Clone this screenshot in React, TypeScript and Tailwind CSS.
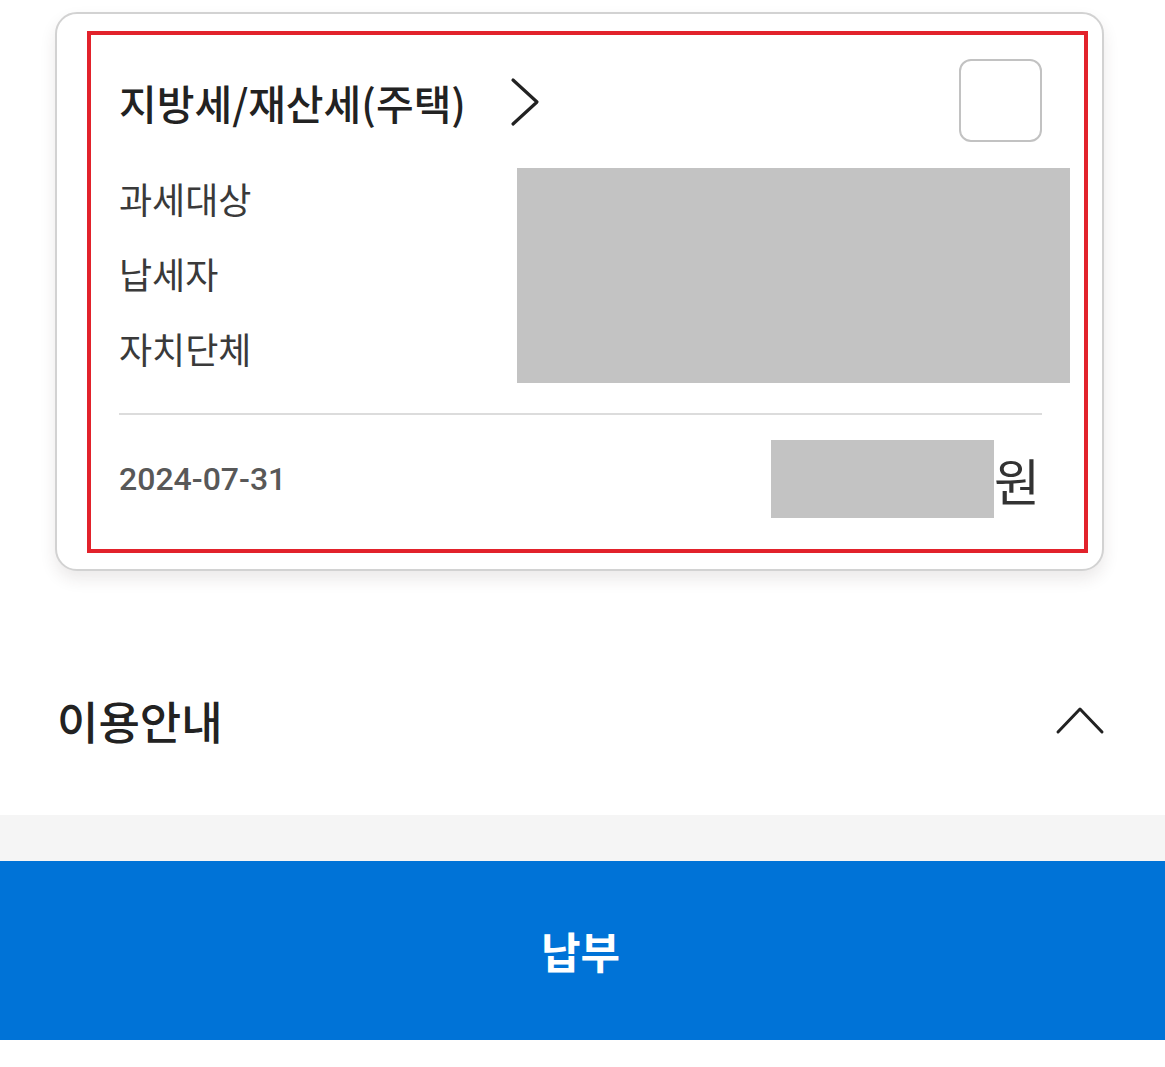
const rows = ['과세대상', '납세자', '자치단체'];

function ChevronRight() {
  return (
    <svg width="30" height="50" viewBox="0 0 30 50" fill="none" className="shrink-0">
      <polyline points="3,3 27,25 3,47" stroke="#222" strokeWidth="3.2" strokeLinecap="round" strokeLinejoin="round" />
    </svg>
  );
}

function ChevronUp() {
  return (
    <svg width="50" height="30" viewBox="0 0 50 30" fill="none" className="shrink-0">
      <polyline points="3,27 25,4 47,27" stroke="#222" strokeWidth="3" strokeLinecap="round" strokeLinejoin="round" />
    </svg>
  );
}

export default function App() {
  return (
    <div
      className="w-[1165px] h-[1067px] bg-white flex flex-col"
      style={{ fontFamily: '"Noto Sans CJK KR", "Noto Sans", sans-serif' }}
    >
      {/* bill card */}
      <div className="pt-[12px] pl-[55px] pr-[61px]">
        <div className="rounded-[22px] border-2 border-[#d2d2d2] bg-white shadow-[0_8px_16px_rgba(60,40,40,0.10)] pl-[30px] pr-[14px] pt-[17px] pb-[16px]">
          <div className="border-[4px] border-[#e2222b] pl-[28px] pr-[42px]">
            <div className="flex items-center justify-between pt-[24px] h-[107px]">
              <div className="flex items-center gap-[44px] pt-[3px]">
                <span className="text-[41px] font-medium text-[#222] leading-none">지방세/재산세(주택)</span>
                <ChevronRight />
              </div>
              <div className="w-[83px] h-[83px] rounded-[12px] border-2 border-[#c2c2c2] bg-white" />
            </div>

            <div className="relative mt-[18px]">
              {rows.map((r) => (
                <div key={r} className="h-[75px] flex items-center text-[36px] text-[#3a3a3a]">
                  {r}
                </div>
              ))}
              <div className="absolute left-[398px] top-[8px] w-[553px] h-[215px] bg-[#c3c3c3]" />
            </div>

            <div className="mt-[28px] h-[2px] bg-[#dcdcdc]" />

            <div className="flex items-center justify-between pt-[25px] pb-[31px]">
              <span
                className="text-[32px] font-medium text-[#585858]"
                style={{ fontFamily: 'Roboto, "Liberation Sans", sans-serif' }}
              >
                2024-07-31
              </span>
              <div className="flex items-center">
                <div className="w-[223px] h-[78px] bg-[#c3c3c3]" />
                <span className="text-[50px] text-[#333] leading-none pr-[2px]">원</span>
              </div>
            </div>
          </div>
        </div>
      </div>

      {/* usage guide header */}
      <div className="h-[244px] pl-[57px] pr-[60px] pt-[114px]">
        <div className="flex items-center justify-between h-[70px]">
          <span className="text-[45px] font-medium text-[#222] leading-none">이용안내</span>
          <ChevronUp />
        </div>
      </div>

      <div className="h-[46px] bg-[#f5f5f5]" />

      <button
        type="button"
        className="h-[179px] w-full bg-[#0073d7] text-white text-[43px] font-bold flex items-center justify-center pr-[4px]"
      >
        납부
      </button>

      <div className="flex-1 bg-white" />
    </div>
  );
}
